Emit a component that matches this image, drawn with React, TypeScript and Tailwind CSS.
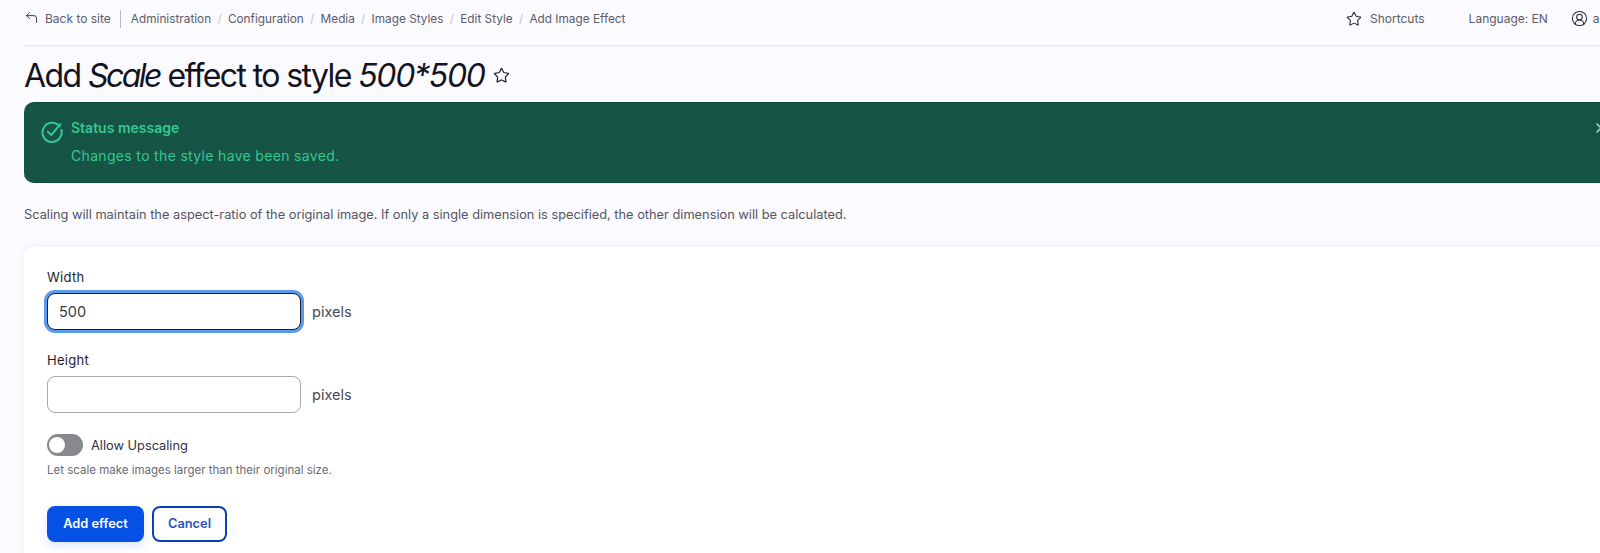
import React from "react";
import { CornerUpLeft, Star, CircleUserRound, X } from "lucide-react";

const crumbs = ["Administration", "Configuration", "Media", "Image Styles", "Edit Style", "Add Image Effect"];

function Field({ label, value, focused }: { label: string; value: string; focused?: boolean }) {
  return (
    <div className="flex flex-col">
      <label className="text-[13px] leading-[20px] font-normal text-[#1d1d2b] tracking-[0.3px]">{label}</label>
      <div className="mt-[6px] flex items-center gap-[11px]">
        <input
          readOnly
          value={value}
          className={
            focused
              ? "w-[254px] h-[37px] rounded-[8px] border border-[#1b1b2b] px-[11px] text-[14.5px] text-[#3b3b47] bg-white outline-none shadow-[0_0_0_3px_#5b9bec]"
              : "w-[254px] h-[37px] rounded-[8px] border border-[#a8a8ad] px-[11px] text-[14.5px] text-[#3b3b47] bg-white outline-none"
          }
        />
        <span className="text-[14.5px] text-[#4a4a55]">pixels</span>
      </div>
    </div>
  );
}

export default function App() {
  return (
    <div className="w-[1600px] h-[553px] overflow-hidden bg-[#fafaff] font-['Inter','Liberation_Sans',sans-serif]">
      <div className="w-[1650px] pl-6">
        <header className="h-[47px] pb-[7px] flex items-center justify-between border-b-2 border-[#eeeef2] text-[12px] text-[#5c5c68]">
          <div className="flex items-center">
            <CornerUpLeft size={15} strokeWidth={1.5} className="text-[#33333d] -mt-1" />
            <span className="ml-[6px]">Back to site</span>
            <span className="ml-[9px] mr-[10px] w-px h-[18px] bg-[#b9b9c0]" />
            <nav className="flex items-center gap-[6.25px] pt-[1px] text-[11.8px]">
              {crumbs.map((c, i) => (
                <React.Fragment key={c}>
                  {i > 0 && <span className="text-[#c2c2c9]">/</span>}
                  <span>{c}</span>
                </React.Fragment>
              ))}
            </nav>
          </div>
          <div className="flex items-center w-[280px] mr-[24px]">
            <Star size={16} strokeWidth={1.6} className="text-[#2b2b35] -mt-[1px]" />
            <span className="ml-[8px]">Shortcuts</span>
            <span className="ml-[44px]">Language: EN</span>
            <CircleUserRound size={17} strokeWidth={1.5} className="ml-[23px] text-[#2b2b35] -mt-[1px]" />
            <span className="ml-[5px]">a</span>
          </div>
        </header>

        <h1 className="mt-[5px] h-[47px] flex items-center text-[32px] leading-[40px] font-normal tracking-[-1.6px] text-[#13131f]">
          <span>
            Add <em className="tracking-[-2.5px]">Scale</em> effect to style <em className="tracking-[-1.3px]">500*500</em>
          </span>
          <Star size={17} strokeWidth={1.7} className="ml-[8px] text-[#22222c]" />
        </h1>

        <div className="relative mt-[3px] h-[81px] rounded-[10px] bg-[#165445] flex pl-[17px] pt-[17px] border-y border-[#0d4a3a]">
          <svg width="22" height="22" viewBox="0 0 22 22" fill="none" stroke="#35c792" strokeWidth="2" strokeLinecap="round" strokeLinejoin="round" className="mt-[1px]">
            <path d="M18.6 5.4 A9.6 9.6 0 1 0 20.4 9" />
            <path d="M6.8 10.6 L10.2 14 L19.5 3.2" />
          </svg>
          <div className="ml-[8px] -mt-[2px]">
            <div className="text-[14px] leading-[20px] font-semibold text-[#35c792]">Status message</div>
            <div className="mt-[8px] text-[14px] leading-[20px] text-[#35c792] tracking-[0.33px]">Changes to the style have been saved.</div>
          </div>
          <X size={16} strokeWidth={2} className="absolute left-[1569px] top-[17px] text-[#9fe8ce]" />
        </div>

        <p className="mt-[23px] text-[12.8px] leading-[18px] text-[#55555f]">
          Scaling will maintain the aspect-ratio of the original image. If only a single dimension is specified, the other dimension will be calculated.
        </p>

        <section className="mt-[23px] h-[320px] rounded-[10px] bg-white shadow-[0_0_6px_rgba(80,80,130,0.08)] pl-[23px] pt-[20px]">
          <Field label="Width" value="500" focused />
          <div className="mt-[20px]">
            <Field label="Height" value="" />
          </div>
          <div className="mt-[21px] flex items-start">
            <span className="relative w-[36px] h-[22px] rounded-full bg-[#88888d]">
              <span className="absolute left-[2px] top-[3px] w-[16px] h-[16px] rounded-full bg-white" />
            </span>
            <span className="ml-[8px] pt-[1px] text-[12.8px] leading-[22px] text-[#33333f]">Allow Upscaling</span>
          </div>
          <p className="mt-[5px] text-[11.5px] leading-[16px] text-[#6a6a75]">Let scale make images larger than their original size.</p>
          <div className="mt-[28px] flex items-center gap-2">
            <button className="h-[36px] w-[97px] rounded-[8px] bg-[#0550e5] text-[12.8px] font-semibold text-white shadow-[0_4px_10px_rgba(5,80,229,0.15)]">Add effect</button>
            <button className="h-[36px] w-[75px] rounded-[8px] border-2 border-[#0c3fb0] bg-white text-[12.8px] font-semibold text-[#2a55b8]">Cancel</button>
          </div>
        </section>
      </div>
    </div>
  );
}
